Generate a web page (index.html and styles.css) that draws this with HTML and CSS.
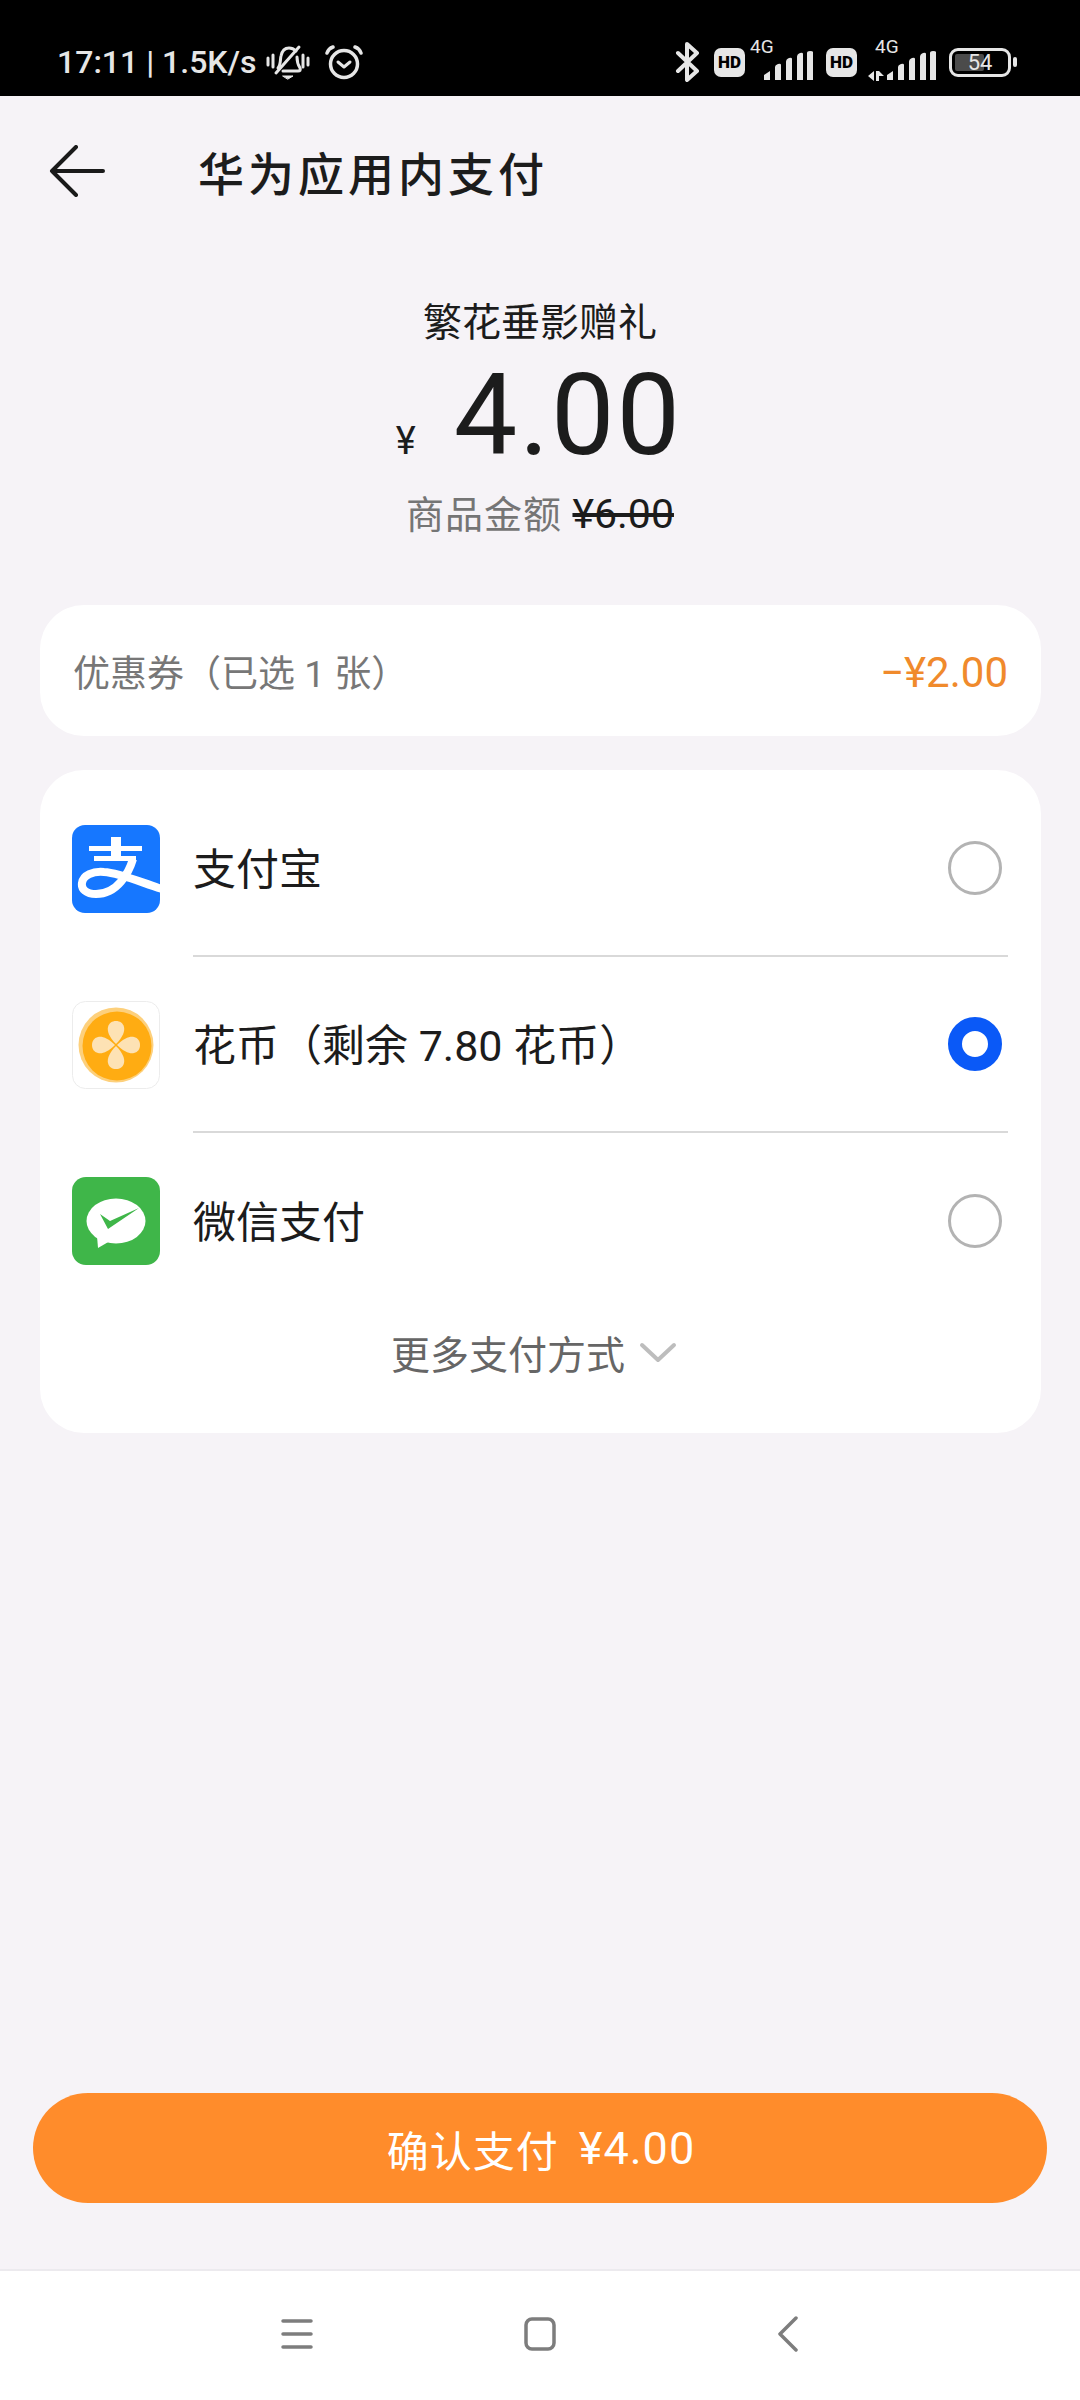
FILE: index.html
```html
<!DOCTYPE html>
<html lang="zh-CN">
<head>
  <meta charset="UTF-8">
  <meta name="viewport" content="width=device-width, initial-scale=1.0">
  <title>华为应用内支付</title>
  <link rel="stylesheet" href="styles.css">
</head>
<body>
  <div class="page">
    <div class="status-bar">
      <div class="status-left">
        <span class="status-time">17:11 | 1.5K/s</span>
        <svg class="bell-icon" width="44" height="36" viewBox="0 0 44 36" fill="none" stroke="#e6e6e6" stroke-width="3" stroke-linecap="round" stroke-linejoin="round">
          <path d="M2 14v7M7 11v12M37 11v12M42 14v7"/>
          <path d="M12 24c3-3 2-8 3-12 1-5 4-8 8-8 3 0 5 1 7 3"/>
          <path d="M31 13c0 5 1 8 3 11 1 2 0 3-2 3H17"/>
          <path d="M10 29 33 3"/>
          <path d="M17 32h10l-5 3z" fill="#e6e6e6" stroke-width="1"/>
        </svg>
        <svg class="alarm-icon" width="38" height="36" viewBox="0 0 38 36" fill="none" stroke="#e6e6e6" stroke-linecap="round" stroke-linejoin="round">
          <circle cx="19" cy="20" r="13.5" stroke-width="3.5"/>
          <path d="M13 18l6 5 6-5" stroke-width="3"/>
          <path d="M2 9c1-3 3-5 6-6M36 9c-1-3-3-5-6-6" stroke-width="3.5"/>
        </svg>
      </div>
      <div class="status-right">
        <svg class="bt-icon" width="26" height="40" viewBox="0 0 26 40" fill="none" stroke="#e6e6e6" stroke-width="4" stroke-linecap="round" stroke-linejoin="round">
          <path d="M3 11 22 29 12 38V2l10 9L3 29"/>
        </svg>
        <span class="hd-badge">HD</span>
        <div class="signal">
          <span class="net-label">4G</span>
          <svg width="50" height="30" viewBox="0 0 50 30" fill="#e6e6e6">
            <path d="M1 29v-5l6-4v9zM12 29V16q0-2 3-3t3 1v15zM23 29V11q0-3 3-4t3 1v21zM34 29V6q0-3 3-4t3 1v26zM44 29V2q0-2 3-2t3 1v28z"/>
          </svg>
        </div>
        <span class="hd-badge">HD</span>
        <div class="signal signal-data">
          <span class="net-label">4G</span>
          <svg width="68" height="30" viewBox="0 0 68 30" fill="#e6e6e6">
            <path d="M0 25l6-5v10zM8 20h3v10H8zM11 20l5 5h-5zM19 29v-5l6-4v9zM30 29V16q0-2 3-3t3 1v15zM41 29V11q0-3 3-4t3 1v21zM52 29V6q0-3 3-4t3 1v26zM62 29V2q0-2 3-2t3 1v28z"/>
          </svg>
        </div>
        <div class="battery">
          <div class="battery-body">
            <div class="battery-fill"></div>
            <span class="battery-num">54</span>
          </div>
          <div class="battery-tip"></div>
        </div>
      </div>
    </div>

    <div class="app-bar">
      <svg class="back-arrow" width="56" height="52" viewBox="0 0 56 52" fill="none" stroke="#1a1a1a" stroke-width="4" stroke-linecap="round" stroke-linejoin="round">
        <path d="M27 2 3 26l24 24M3 26h51"/>
      </svg>
      <div class="app-title">华为应用内支付</div>
    </div>

    <div class="summary">
      <div class="product-name">繁花垂影赠礼</div>
      <div class="amount"><span class="amount-yen">¥</span><span class="amount-num">4.00</span></div>
      <div class="original">商品金额 <s class="original-price">¥6.00</s></div>
    </div>

    <div class="coupon-card">
      <span class="coupon-label">优惠券（已选 1 张）</span>
      <span class="coupon-value">−¥2.00</span>
    </div>

    <div class="pay-card">
      <div class="pay-row">
        <svg class="pay-icon" viewBox="0 0 88 88">
          <rect width="88" height="88" rx="13" fill="#1677ff"/>
          <g fill="none" stroke="#fff">
            <path d="M17 23.5h53M22 33.500h42" stroke-width="5"/>
            <path d="M44 12v22" stroke-width="10"/>
            <path d="M61 34C57 47 46 69 24 69 14 69 9 64 10 58 11 50 21 46 32 47 48 48 68 57 90 64" stroke-width="8"/>
          </g>
        </svg>
        <div class="pay-body">
          <span class="pay-name">支付宝</span>
          <span class="radio"></span>
        </div>
      </div>
      <div class="pay-row">
        <svg class="pay-icon" viewBox="0 0 88 88">
          <rect x=".5" y=".5" width="87" height="87" rx="13" fill="#fff" stroke="#ececec"/>
          <circle cx="44" cy="44" r="37.500" fill="#fdd07c"/>
          <circle cx="45" cy="45" r="34.500" fill="#ffac12"/>
          <g fill="#fde2b4">
            <path d="M44 43C37 36 35 30 36 26c1-4 4-6 8-6s7 2 8 6c1 4-1 10-8 17z"/>
            <path d="M45 44C52 37 58 35 62 36c4 1 6 4 6 8s-2 7-6 8c-4 1-10-1-17-8z"/>
            <path d="M44 45C51 52 53 58 52 62c-1 4-4 6-8 6s-7-2-8-6c-1-4 1-10 8-17z"/>
            <path d="M43 44C36 51 30 53 26 52c-4-1-6-4-6-8s2-7 6-8c4-1 10 1 17 8z"/>
          </g>
        </svg>
        <div class="pay-body">
          <span class="pay-name">花币（剩余 7.80 花币）</span>
          <span class="radio radio-on"></span>
        </div>
      </div>
      <div class="pay-row">
        <svg class="pay-icon" viewBox="0 0 88 88">
          <rect width="88" height="88" rx="14" fill="#3fb649"/>
          <ellipse cx="44" cy="44" rx="29.500" ry="22.500" fill="#fff"/>
          <path d="M25 59l1 12 12-7z" fill="#fff"/>
          <path d="M28 37l10 7 29-13-31 21z" fill="#3fb649"/>
        </svg>
        <div class="pay-body pay-body-last">
          <span class="pay-name">微信支付</span>
          <span class="radio"></span>
        </div>
      </div>
      <div class="more-row">
        <span class="more-text">更多支付方式</span>
        <svg width="38" height="22" viewBox="0 0 38 22" fill="none" stroke="#bdbdbd" stroke-width="4" stroke-linecap="round" stroke-linejoin="round">
          <path d="M3 3l16 15L35 3"/>
        </svg>
      </div>
    </div>

    <div class="confirm-wrap">
      <div class="confirm-button">确认支付 <span class="confirm-price">¥4.00</span></div>
    </div>

    <div class="nav-bar">
      <svg width="32" height="30" viewBox="0 0 32 30" fill="none" stroke="#7d7d7d" stroke-width="3.500" stroke-linecap="round">
        <path d="M2 2h28M2 15h28M2 28h28"/>
      </svg>
      <svg width="32" height="34" viewBox="0 0 32 34" fill="none" stroke="#7d7d7d" stroke-width="3.500">
        <rect x="2" y="2" width="28" height="30" rx="6"/>
      </svg>
      <svg width="32" height="36" viewBox="-10 0 32 36" fill="none" stroke="#7d7d7d" stroke-width="3.500" stroke-linecap="round" stroke-linejoin="round">
        <path d="M19 2 3 18l16 16"/>
      </svg>
    </div>
  </div>
</body>
</html>
```

FILE: styles.css
```css
* {
  box-sizing: border-box;
}

body {
  margin: 0;
  font-family: Roboto, "Noto Sans CJK SC", sans-serif;
  background-color: #f6f3f7;
  color: #1c1c1c;
}

.page {
  display: flex;
  flex-direction: column;
  min-height: 2400px;
  overflow: hidden;
}

/* status bar */
.status-bar {
  height: 96px;
  background: #000;
  display: flex;
  justify-content: space-between;
  align-items: center;
  padding: 28px 63px 0 57px;
  color: #e6e6e6;
}

.status-left,
.status-right {
  display: flex;
  align-items: center;
}

.status-time {
  font-size: 32px;
  font-weight: 500;
}

.bell-icon {
  margin-left: 10px;
}

.alarm-icon {
  margin-left: 15px;
}

.hd-badge {
  width: 31px;
  height: 29px;
  margin-left: 13px;
  border-radius: 7px;
  background: #e6e6e6;
  color: #000;
  font-size: 17px;
  font-weight: 900;
  line-height: 29px;
  text-align: center;
}

.signal {
  position: relative;
  margin-left: 18px;
  padding-top: 8px;
  display: flex;
}

.signal-data {
  margin-left: 11px;
}

.net-label {
  position: absolute;
  top: -7px;
  left: -13px;
  font-size: 19px;
  line-height: 22px;
}

.signal-data .net-label {
  left: 7px;
}

.battery {
  display: flex;
  align-items: center;
  margin-left: 13px;
}

.battery-body {
  position: relative;
  width: 62px;
  height: 29px;
  border: 3px solid #e6e6e6;
  border-radius: 9px;
  text-align: center;
}

.battery-fill {
  position: absolute;
  left: 3px;
  top: 3px;
  bottom: 3px;
  width: 29px;
  border-radius: 2px;
  background: #4b4b4b;
}

.battery-num {
  position: relative;
  display: block;
  font-size: 22px;
  line-height: 23px;
}

.battery-tip {
  width: 4px;
  height: 10px;
  margin-left: 2px;
  border-radius: 2px;
  background: #e6e6e6;
}

/* header */
.app-bar {
  height: 160px;
  display: flex;
  align-items: center;
  padding: 0 0 10px 49px;
  gap: 93px;
}

.back-arrow {
  flex: none;
}

.app-title {
  font-size: 46px;
  font-weight: 500;
  letter-spacing: 4px;
}

/* price summary */
.summary {
  padding-top: 44px;
  text-align: center;
}

.product-name {
  font-size: 39px;
  line-height: 46px;
}

.amount {
  margin-top: 14px;
  height: 112px;
  display: flex;
  justify-content: center;
  align-items: baseline;
  line-height: 112px;
  padding-right: 2px;
}

.amount-yen {
  font-size: 38px;
  line-height: 1;
  margin-right: 38px;
}

.amount-num {
  font-size: 113px;
  letter-spacing: 2px;
}

.original {
  margin-top: 19px;
  font-size: 38px;
  letter-spacing: 1px;
  line-height: 46px;
  color: #757575;
}

.original-price {
  color: #1c1c1c;
  font-size: 41px;
  letter-spacing: 0;
}

/* coupon */
.coupon-card {
  margin: 67px 39px 0 40px;
  height: 131px;
  padding: 0 33px;
  border-radius: 44px;
  background: #fff;
  display: flex;
  justify-content: space-between;
  align-items: center;
}

.coupon-label {
  font-size: 37px;
  color: #777;
}

.coupon-value {
  padding-top: 3px;
  font-size: 42px;
  color: #f08a2c;
}

/* payment methods */
.pay-card {
  margin: 34px 39px 0 40px;
  padding: 11px 33px 36px 32px;
  border-radius: 44px;
  background: #fff;
}

.pay-row {
  display: flex;
  align-items: center;
  gap: 33px;
}

.pay-icon {
  width: 88px;
  height: 88px;
  flex: none;
  display: block;
}

.pay-body {
  flex: 1;
  height: 176px;
  padding-right: 6px;
  border-bottom: 2px solid #d9d9d9;
  display: flex;
  justify-content: space-between;
  align-items: center;
}

.pay-body-last {
  border-bottom: none;
}

.pay-name {
  padding-bottom: 4px;
  font-size: 43px;
}

.radio {
  width: 54px;
  height: 54px;
  border: 3px solid #b3b3b3;
  border-radius: 50%;
  flex: none;
}

.radio-on {
  border: 14px solid #0a59f7;
}

.more-row {
  height: 88px;
  padding-right: 12px;
  display: flex;
  justify-content: center;
  align-items: center;
  gap: 14px;
}

.more-text {
  padding-bottom: 3px;
  font-size: 39px;
  color: #666;
}

/* confirm */
.confirm-wrap {
  margin-top: auto;
  padding: 0 33px 66px;
}

.confirm-button {
  height: 110px;
  padding-left: 2px;
  border-radius: 55px;
  background: #ff8c2b;
  color: #fff;
  font-size: 42px;
  letter-spacing: 1px;
  display: flex;
  justify-content: center;
  align-items: center;
  gap: 20px;
}

.confirm-price {
  font-size: 45px;
}

/* system nav */
.nav-bar {
  height: 131px;
  padding: 0 281px 4px;
  border-top: 2px solid #eceaee;
  background: #fff;
  display: flex;
  justify-content: space-between;
  align-items: center;
}
```
